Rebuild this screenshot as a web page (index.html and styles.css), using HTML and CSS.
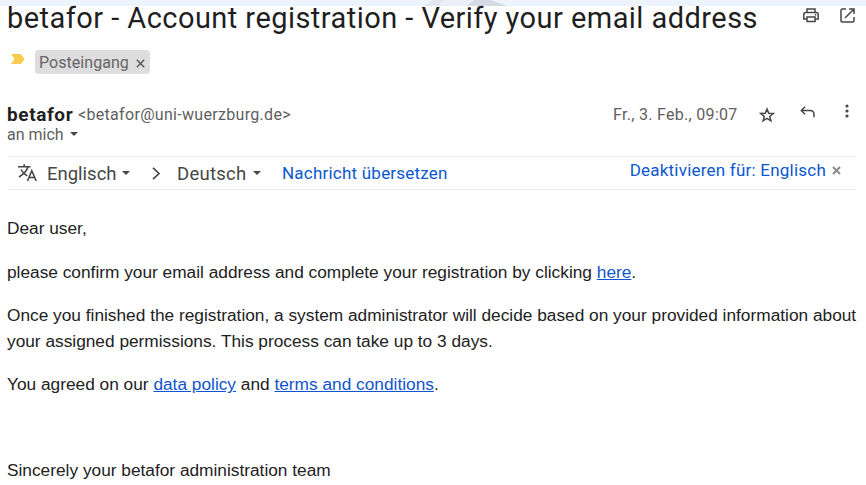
FILE: index.html
```html
<!DOCTYPE html>
<html lang="de">
<head>
<meta charset="utf-8">
<title>betafor - Account registration</title>
<link rel="stylesheet" href="styles.css">
</head>
<body>
<div class="backdrop"><svg width="90" height="6" viewBox="0 0 90 6"><path d="M2 6L8 3 12 0H23L17 6Z" fill="#e2e8f1"/><path d="M43 6l5-2 5-4h17l8 3 9 3z" fill="#d5dbe5"/><path d="M17 6l6-6h30l-5 4-5 2z" fill="#eceff7"/></svg></div>
<main class="message">
  <header class="subject">
    <h1><span>betafor - Account registration - Verify your email address</span></h1>
    <div class="tools">
      <svg class="print" width="16" height="15" viewBox="0 0 16 15" fill="none" stroke="#444746" stroke-width="1.500"><path d="M4 4.5V1h8v3.500M4 11H.8V6.500q0-2 2-2h10.400q2 0 2 2V11H12M4 9h8v4.500H4z"/><path d="M11.800 6.800h1.500"/></svg>
      <svg width="15" height="15" viewBox="0 0 15 15" fill="none" stroke="#444746" stroke-width="1.500"><path d="M6 1H2.200Q1 1 1 2.200v10.600Q1 14 2.200 14h10.600q1.200 0 1.200-1.200V9M9 1h5v5M14 1L5 10"/></svg>
    </div>
  </header>
  <div class="labels">
    <svg width="14" height="10" viewBox="0 0 14 10"><path d="M0 0h9q1 0 1.600.800L13.500 5l-2.900 4.200Q10 10 9 10H0l3.500-5z" fill="#f7cb4d"/></svg>
    <div class="chip"><span>Posteingang</span><svg width="9" height="9" viewBox="0 0 9 9" stroke="#555" stroke-width="1.400"><path d="M.8.8l7.400 7.400M8.200.8L.8 8.200"/></svg></div>
  </div>
  <section class="sender">
    <div class="who">
      <div class="from"><b>betafor</b><span class="email">&lt;betafor@uni-wuerzburg.de&gt;</span></div>
      <div class="to"><span>an mich</span><i class="caret"></i></div>
    </div>
    <div class="meta">
      <span class="date">Fr., 3. Feb., 09:07</span>
      <svg class="star" width="16" height="16" viewBox="0 0 16 16" fill="none" stroke="#444746" stroke-width="1.500"><path d="M8 2l1.700 4.200 4.500.300-3.500 2.900 1.200 4.400L8 11.400l-3.900 2.400 1.200-4.400-3.500-2.900 4.500-.300z"/></svg>
      <svg class="reply" width="16" height="12" viewBox="0 0 16 12" fill="none" stroke="#444746" stroke-width="1.500"><path d="M5 .8L1.300 4.500 5 8.200M1.300 4.500H10q4 0 4 4v2.800"/></svg>
      <svg class="more" width="4" height="14" viewBox="0 0 4 14" fill="#444746"><circle cx="2" cy="2" r="1.600"/><circle cx="2" cy="7" r="1.600"/><circle cx="2" cy="12" r="1.600"/></svg>
    </div>
  </section>
  <section class="translate">
    <svg class="lang-icon" width="20" height="18" viewBox="0 0 20 18" fill="none" stroke="#444746" stroke-width="1.600"><path d="M0 2.800h12.500M6.200.3v2.500M10 2.800Q8.500 8.500 1 13M3 5.500Q5 9.500 9.300 11.800"/><path d="M9.500 17L13.800 6.800 18.200 17M11.200 13.500h5.300"/></svg>
    <span class="language source">Englisch</span><i class="caret"></i>
    <svg class="chevron" width="9" height="13" viewBox="0 0 9 13" fill="none" stroke="#444746" stroke-width="1.700"><path d="M1 .8l6 5.700-6 5.700"/></svg>
    <span class="language target">Deutsch</span><i class="caret"></i>
    <a class="action">Nachricht übersetzen</a>
    <div class="disable"><a>Deaktivieren für: Englisch</a><svg width="9" height="9" viewBox="0 0 9 9" stroke="#8a8a8a" stroke-width="2"><path d="M1 1l7 7M8 1L1 8"/></svg></div>
  </section>
  <article class="body">
    <p>Dear user,</p>
    <p>please confirm your email address and complete your registration by clicking <a>here</a>.</p>
    <p>Once you finished the registration, a system administrator will decide based on your provided information about<br>your assigned permissions. This process can take up to 3 days.</p>
    <p>You agreed on our <a>data policy</a> and <a>terms and conditions</a>.</p>
    <p class="closing">Sincerely your betafor administration team</p>
  </article>
</main>
</body>
</html>
```
FILE: styles.css
```css
* { box-sizing: border-box; }
body { margin: 0; background: #fff; overflow: hidden; font-family: Roboto, "Liberation Sans", sans-serif; color: #1f1f1f; }
svg { display: block; flex: none; }
.backdrop { height: 6px; background: #edf4fe; padding-left: 421px; }
.message { padding: 0 9px 0 7px; }
.subject { height: 39px; display: flex; justify-content: space-between; }
h1 { margin: -5px 0 0; font-size: 29px; line-height: 34px; font-weight: 400; white-space: nowrap; letter-spacing: .45px; }
.tools { display: flex; gap: 21px; padding: 2px 2px 0 0; }
.labels { display: flex; align-items: center; height: 34px; padding-left: 4px; }
.labels > svg { margin-top: -6px; }
.chip { margin-left: 10px; width: 115px; height: 24px; background: #ddd; border-radius: 4px; display: flex; align-items: center; padding-left: 4px; font-size: 16px; color: #666; }
.chip span { width: 97px; letter-spacing: .05px; }
.chip svg { margin-top: 3px; }
.sender { display: flex; justify-content: space-between; height: 77px; padding-top: 25px; }
.from { display: flex; height: 21px; line-height: 21px; }
.from b { width: 71px; font-size: 19px; line-height: 22px; letter-spacing: .6px; }
.email, .to, .date { font-size: 16px; color: #5e5e5e; white-space: nowrap; }
.email { letter-spacing: .31px; }
.to { display: flex; align-items: center; height: 18px; }
.to span { width: 63px; }
.caret { width: 0; height: 0; border: 4px solid transparent; border-top-color: #444746; border-bottom: 0; flex: none; }
.meta { display: flex; padding-right: 8px; }
.date { line-height: 21px; width: 146px; letter-spacing: .3px; }
.star { margin-top: 3px; }
.reply { margin: 2px 0 0 25px; }
.more { margin: 0 0 0 29px; }
.translate { height: 34px; border: solid #ececec; border-width: 1px 0; display: flex; align-items: center; padding-left: 11px; white-space: nowrap; color: #444746; }
.language { font-size: 18.500px; line-height: 24px; padding-top: 1px; }
.source { width: 75px; margin-left: 9px; }
.chevron { margin-left: 22px; }
.target { width: 76px; margin-left: 16px; letter-spacing: .25px; }
.translate a { color: #0b57d0; font-size: 17px; letter-spacing: .22px; }
.action { margin-left: 21px; }
.disable { display: flex; align-items: center; gap: 6px; margin: -6px 16px 0 auto; }
.body { padding-top: 25.300px; font: 17.300px/26px "Liberation Sans", Arial, sans-serif; color: #222; white-space: nowrap; }
.body p { margin: 0 0 17.300px; }
.body a { color: #1155cc; text-decoration: underline; }
.body .closing { margin-top: 60px; }
```
